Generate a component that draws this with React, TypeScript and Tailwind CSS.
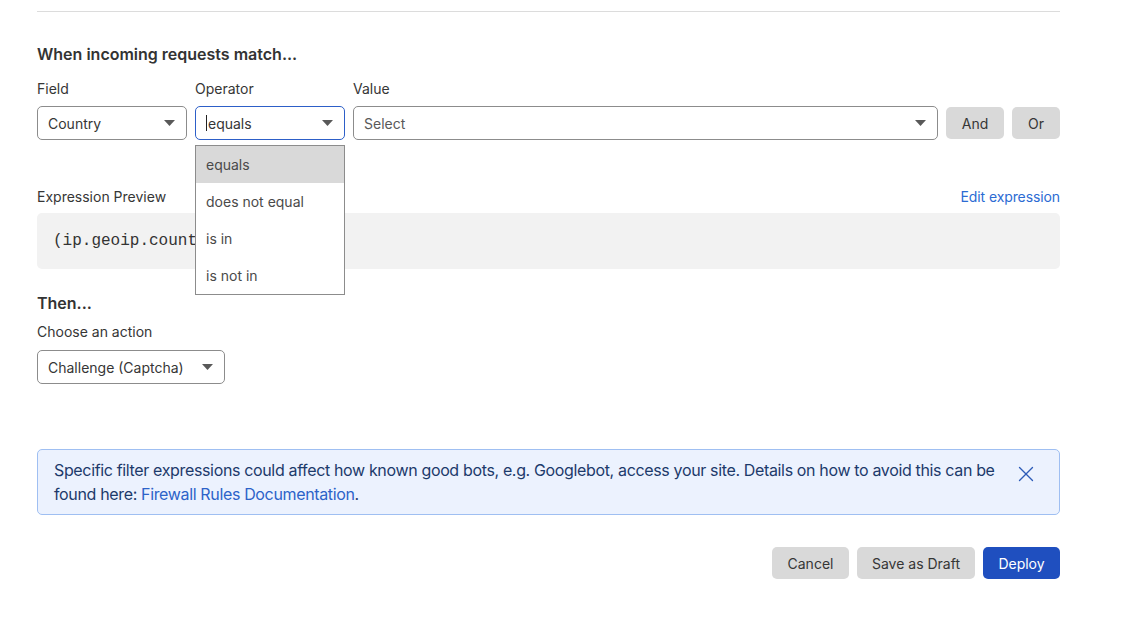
import { X } from 'lucide-react'
import clsx from 'clsx'

const Caret = () => (
  <svg width="11" height="6" viewBox="0 0 11 6" className="shrink-0">
    <path d="M0 0h11L5.5 6z" fill="#595959" />
  </svg>
)

type SelectBoxProps = {
  value: string
  placeholder?: boolean
  focused?: boolean
  cursor?: boolean
  className?: string
}

const SelectBox = ({ value, placeholder, focused, cursor, className }: SelectBoxProps) => (
  <div
    className={clsx(
      'flex h-[34px] items-center justify-between rounded-[5px] border bg-white pl-[10px] pr-[11px]',
      focused ? 'border-[#2d5fc8]' : 'border-[#8c8c8c]',
      className,
    )}
  >
    <span
      className={clsx(
        'flex items-center text-[14px]',
        placeholder ? 'text-[#595959]' : 'text-[#363636]',
      )}
    >
      {cursor && <span className="mr-px h-[16px] w-px bg-[#222]" />}
      {value}
    </span>
    <Caret />
  </div>
)

const GrayButton = ({ children, className }: { children: React.ReactNode; className?: string }) => (
  <button
    className={clsx(
      'flex h-[32px] items-center justify-center rounded-[5px] bg-[#d9d9d9] text-[14px] text-[#363636]',
      className,
    )}
  >
    {children}
  </button>
)

const operators = ['equals', 'does not equal', 'is in', 'is not in']

export default function App() {
  return (
    <div
      className="min-h-[623px] bg-white pt-[11px] text-[#363636]"
      style={{ fontFamily: 'Inter, "Noto Sans", sans-serif' }}
    >
      <div className="ml-[37px] w-[1023px]">
        <div className="border-t border-[#dcdcdc]" />

        <h2 className="mt-[30px] text-[16px] font-semibold leading-[24px] text-[#333]">
          When incoming requests match...
        </h2>

        <div className="mt-[13px] flex items-start gap-[8px]">
          <div className="flex w-[150px] flex-col gap-[7px]">
            <label className="text-[14px] leading-[20px]">Field</label>
            <SelectBox value="Country" />
          </div>
          <div className="relative flex w-[150px] flex-col gap-[7px]">
            <label className="text-[14px] leading-[20px]">Operator</label>
            <SelectBox value="equals" focused cursor />
            <ul className="absolute left-0 top-[66px] z-10 w-[150px] border border-[#8c8c8c] bg-white">
              {operators.map((op, i) => (
                <li
                  key={op}
                  className={clsx(
                    'flex h-[37px] items-center px-[10px] text-[14px] text-[#4a4a4a]',
                    i === 0 && 'bg-[#d9d9d9]',
                  )}
                >
                  {op}
                </li>
              ))}
            </ul>
          </div>
          <div className="flex flex-1 flex-col gap-[7px]">
            <label className="text-[14px] leading-[20px]">Value</label>
            <SelectBox value="Select" placeholder />
          </div>
          <div className="flex gap-[8px] pt-[28px]">
            <GrayButton className="w-[58px]">And</GrayButton>
            <GrayButton className="w-[48px]">Or</GrayButton>
          </div>
        </div>

        <div className="mt-[47px] flex items-center justify-between">
          <span className="text-[14px] leading-[20px]">Expression Preview</span>
          <a className="text-[14px] leading-[20px] tracking-[-0.1px] text-[#2c6bd3]">Edit expression</a>
        </div>
        <div className="mt-[6px] flex h-[56px] items-center rounded-[5px] bg-[#f2f2f2] px-[16px]">
          <code
            className="text-[16px] text-[#333]"
            style={{ fontFamily: '"Liberation Mono", monospace' }}
          >
            (ip.geoip.country eq "")
          </code>
        </div>

        <h2 className="mt-[22px] text-[16px] font-semibold leading-[24px] text-[#333]">Then...</h2>
        <label className="mt-[7px] block text-[14px] leading-[20px]">Choose an action</label>
        <SelectBox value="Challenge (Captcha)" className="mt-[8px] w-[188px]" />

        <div className="mt-[65px] flex items-start rounded-[5px] border border-[#9fbff2] bg-[#ecf2fe] py-[8px] pl-[16px] pr-[20px]">
          <p className="w-[950px] text-[16px] leading-[24px] tracking-[-0.35px] text-[#1d3a6b]">
            Specific filter expressions could affect how known good bots, e.g. Googlebot, access your
            site. Details on how to avoid this can be found here:{' '}
            <a className="text-[#2c63c9]">Firewall Rules Documentation</a>.
          </p>
          <button className="ml-auto mt-[3px] text-[#2c5bb8]">
            <X size={26} strokeWidth={1.25} />
          </button>
        </div>

        <div className="mt-[32px] flex justify-end gap-[8px]">
          <GrayButton className="w-[77px]">Cancel</GrayButton>
          <GrayButton className="w-[118px]">Save as Draft</GrayButton>
          <button className="flex h-[32px] w-[77px] items-center justify-center rounded-[5px] bg-[#1f4fbf] text-[14px] text-white">
            Deploy
          </button>
        </div>
      </div>
    </div>
  )
}
